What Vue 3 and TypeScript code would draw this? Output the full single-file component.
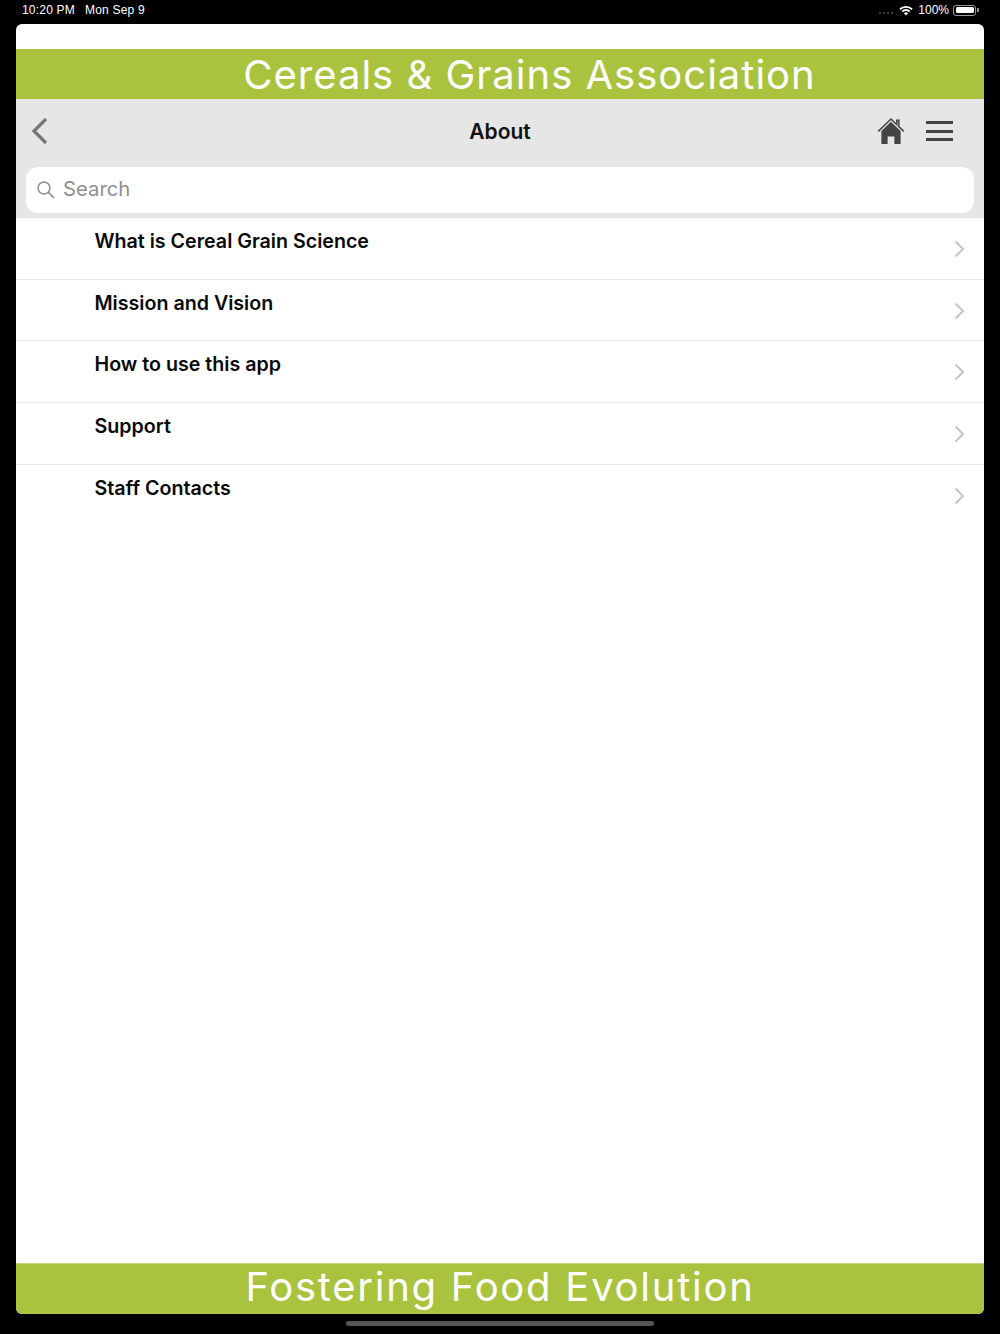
<script setup lang="ts">
const topics: string[] = [
  'What is Cereal Grain Science',
  'Mission and Vision',
  'How to use this app',
  'Support',
  'Staff Contacts',
];
</script>

<template>
  <div class="screen">
    <div class="status-bar">
      <div class="status-left">
        <span>10:20 PM</span>
        <span>Mon Sep 9</span>
      </div>
      <div class="status-right">
        <span class="signal"><i></i><i></i><i></i><i></i></span>
        <svg class="wifi" width="14" height="11" viewBox="0 0 14 11">
          <path d="M0.3 3.6 A9.6 9.6 0 0 1 13.7 3.6 L12.4 5 A7.7 7.7 0 0 0 1.6 5 Z" fill="#fff" />
          <path d="M2.6 5.9 A6.3 6.3 0 0 1 11.4 5.9 L10.1 7.2 A4.4 4.4 0 0 0 3.9 7.2 Z" fill="#fff" />
          <path d="M4.9 8.2 A3 3 0 0 1 9.1 8.2 L7 10.4 Z" fill="#fff" />
        </svg>
        <span>100%</span>
        <span class="battery"><span class="battery-fill"></span></span>
        <span class="battery-cap"></span>
      </div>
    </div>

    <div class="window">
      <div class="top-gap"></div>
      <div class="banner banner-top">Cereals &amp; Grains Association</div>

      <div class="nav-bar">
        <svg class="back" width="18" height="28" viewBox="0 0 18 28">
          <path d="M15 2 L3 14 L15 26" fill="none" stroke="#777" stroke-width="3.2" />
        </svg>
        <span class="nav-title">About</span>
        <div class="nav-actions">
          <svg class="home" width="28" height="28" viewBox="0 0 28 28">
            <path d="M1.2 14.4 L14 2 L19.8 7.6 V3.4 H21.8 V9.6 L26.8 14.4" fill="none" stroke="#4a4a4a" stroke-width="1.6" />
            <path d="M14 4.8 L23.6 14 V27 H17.4 V19.6 H10.6 V27 H4.4 V14 Z" fill="#444" />
          </svg>
          <div class="burger"><i></i><i></i><i></i></div>
        </div>
      </div>

      <div class="search-wrap">
        <div class="search">
          <svg width="20" height="20" viewBox="0 0 20 20">
            <circle cx="8" cy="8" r="6" fill="none" stroke="#8e8e93" stroke-width="1.5" />
            <path d="M12.4 12.4 L18 18" stroke="#8e8e93" stroke-width="1.7" />
          </svg>
          <span class="search-text">Search</span>
        </div>
      </div>

      <ul class="list">
        <li v-for="topic in topics" :key="topic" class="row">
          <span class="row-label">{{ topic }}</span>
          <svg class="chevron" width="11" height="18" viewBox="0 0 11 18">
            <path d="M1.5 1.5 L9 9 L1.5 16.5" fill="none" stroke="#c4c4c7" stroke-width="2" />
          </svg>
        </li>
      </ul>

      <div class="banner banner-bottom">Fostering Food Evolution</div>
    </div>

    <div class="home-indicator"></div>
  </div>
</template>

<style>
body {
  background: #000;
}
</style>

<style scoped>
.screen {
  width: 1000px;
  height: 1334px;
  background: #000;
  display: flex;
  flex-direction: column;
  font-family: Inter, "Liberation Sans", sans-serif;
  overflow: hidden;
}

.status-bar {
  height: 24px;
  flex: none;
  padding: 0 22px;
  display: flex;
  justify-content: space-between;
  align-items: flex-start;
  color: #fff;
  font-family: "Liberation Sans", sans-serif;
  font-size: 12px;
  line-height: 20px;
}

.status-left {
  display: flex;
  gap: 10px;
  letter-spacing: 0.2px;
}

.status-right {
  display: flex;
  align-items: center;
  height: 20px;
  margin-right: -0.5px;
}

.signal {
  display: flex;
  gap: 1.5px;
  margin: 6px 6px 0 0;
}

.signal i {
  width: 2.5px;
  height: 2.5px;
  border-radius: 50%;
  background: #555;
}

.wifi {
  margin-right: 5px;
}

.battery {
  width: 23px;
  height: 11px;
  margin-left: 4px;
  padding: 1.5px;
  box-sizing: border-box;
  border: 1px solid #999;
  border-radius: 3px;
  display: flex;
}

.battery-fill {
  flex: 1;
  background: #fff;
  border-radius: 1.5px;
}

.battery-cap {
  width: 1.5px;
  height: 4px;
  margin-left: 1px;
  background: #999;
  border-radius: 0 1px 1px 0;
}

.window {
  width: 968px;
  height: 1290px;
  flex: none;
  margin: 0 16px;
  background: #fff;
  border-radius: 6px;
  overflow: hidden;
  display: flex;
  flex-direction: column;
}

.top-gap {
  height: 25px;
  flex: none;
}

.banner {
  height: 50px;
  flex: none;
  box-sizing: border-box;
  background: #aac33f;
  color: #fff;
  text-align: center;
  font-family: Inter, sans-serif;
  font-size: 40px;
  font-weight: 400;
  white-space: nowrap;
}

.banner-top {
  line-height: 52px;
  padding-left: 59px;
  letter-spacing: 1px;
}

.banner-bottom {
  height: 51px;
  margin-top: auto;
  line-height: 46px;
  letter-spacing: 1.75px;
  border-top: 1px solid #c8d68c;
}

.nav-bar {
  height: 68px;
  flex: none;
  box-sizing: border-box;
  position: relative;
  background: #e6e6e6;
  display: flex;
  align-items: center;
  justify-content: space-between;
  padding: 0 31px 4px 15px;
}

.nav-title {
  position: absolute;
  left: 0;
  right: 0;
  top: 20px;
  text-align: center;
  color: #111;
  font-size: 21px;
  font-weight: 600;
  line-height: 26px;
}

.nav-actions {
  display: flex;
  align-items: center;
  gap: 21px;
}

.burger {
  width: 27px;
  display: flex;
  flex-direction: column;
  gap: 5.5px;
}

.burger i {
  height: 3px;
  background: #444;
}

.search-wrap {
  height: 51px;
  flex: none;
  box-sizing: border-box;
  background: #e6e6e6;
  padding: 0 10px 5px 10px;
}

.search {
  height: 46px;
  background: #fff;
  border-radius: 12px;
  display: flex;
  align-items: center;
  gap: 7px;
  padding-left: 10px;
  color: #8e8e93;
  font-size: 20.3px;
}

.search-text {
  margin-top: -3px;
}

.list {
  list-style: none;
  margin: 0;
  padding: 0;
}

.row {
  height: 61.7px;
  box-sizing: border-box;
  padding: 11px 19px 0 78.5px;
  display: flex;
  justify-content: space-between;
  align-items: flex-start;
  border-bottom: 1px solid #ececec;
}

.row:last-child {
  border-bottom: none;
}

.row-label {
  color: #0a0a0a;
  font-size: 19.65px;
  font-weight: 600;
  line-height: 25px;
}

.chevron {
  margin-top: 11px;
}

.home-indicator {
  width: 308px;
  height: 5px;
  margin: 7px auto 0;
  background: #555;
  border-radius: 3px;
}
</style>
